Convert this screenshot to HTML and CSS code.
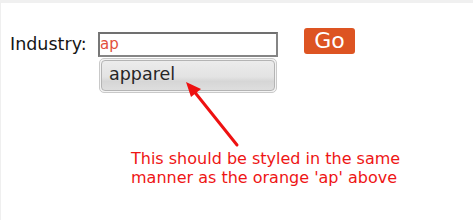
FILE: index.html
```html
<!DOCTYPE html>
<html>
<head>
<meta charset="utf-8">
<link rel="stylesheet" href="styles.css">
</head>
<body>
<div class="page">
  <div class="row">
    <label class="label">Industry:</label>
    <div class="field">
      <div class="input"><span class="typed">ap</span></div>
      <div class="menu">
        <div class="item">apparel</div>
      </div>
    </div>
    <button class="go">Go</button>
  </div>
  <p class="note">This should be styled in the same<br>manner as the orange 'ap' above</p>
  <svg class="arrow" width="474" height="223" viewBox="0 0 474 223">
    <line x1="237" y1="145" x2="193" y2="90" stroke="#ee1111" stroke-width="3" stroke-linecap="round"/>
    <polygon points="186,82 201,89 191,97" fill="#ee1111"/>
  </svg>
</div>
</body>
</html>
```
FILE: styles.css
```css
html, body {
  margin: 0;
  padding: 0;
  background: #ffffff;
}
body {
  width: 474px;
  height: 223px;
  overflow: hidden;
  font-family: "DejaVu Sans", Verdana, sans-serif;
}
.page {
  position: relative;
  height: 220px;
  border-top: 3px solid #f0f0f0;
  border-left: 1px solid #efefef;
  box-sizing: border-box;
  width: 473px;
}
.row {
  display: flex;
  align-items: flex-start;
  padding: 25px 0 0 9px;
}
.label {
  font-size: 17.5px;
  line-height: 20px;
  color: #151515;
  margin-top: 6px;
  width: 88px;
}
.field {
  position: relative;
  width: 180px;
  margin-top: 4px;
}
.input {
  box-sizing: border-box;
  height: 25px;
  border: 2px solid #858585;
  border-top-color: #707070;
  border-left-color: #777;
  background: #fff;
  padding-left: 0;
}
.typed {
  font-size: 15px;
  line-height: 19px;
  color: #e2503c;
  display: block;
  margin-top: 1px;
}
.menu {
  position: absolute;
  left: 1px;
  top: 26px;
  width: 178px;
  height: 35px;
  box-sizing: border-box;
  border: 1px solid #c9c9c9;
  border-radius: 5px;
  padding: 1px;
  background: #f4f4f4;
}
.item {
  box-sizing: border-box;
  height: 31px;
  border: 1px solid #b4b4b4;
  border-radius: 4px;
  background: linear-gradient(#ececec 0%, #e3e3e3 55%, #d6d6d6 70%, #dedede 100%);
  font-size: 17.5px;
  line-height: 27px;
  color: #262626;
  padding-left: 7px;
}
.go {
  margin-left: 26px;
  margin-top: 0;
  width: 51px;
  height: 26px;
  border: none;
  border-radius: 3px;
  background: #dd5422;
  color: #ffffff;
  font-family: "DejaVu Sans", Verdana, sans-serif;
  font-size: 22px;
  line-height: 26px;
  padding: 0;
}
.note {
  margin: 92px 0 0 130px;
  font-size: 16px;
  line-height: 19px;
  color: #ee1515;
}
.arrow {
  position: absolute;
  left: -1px;
  top: -3px;
}
```
